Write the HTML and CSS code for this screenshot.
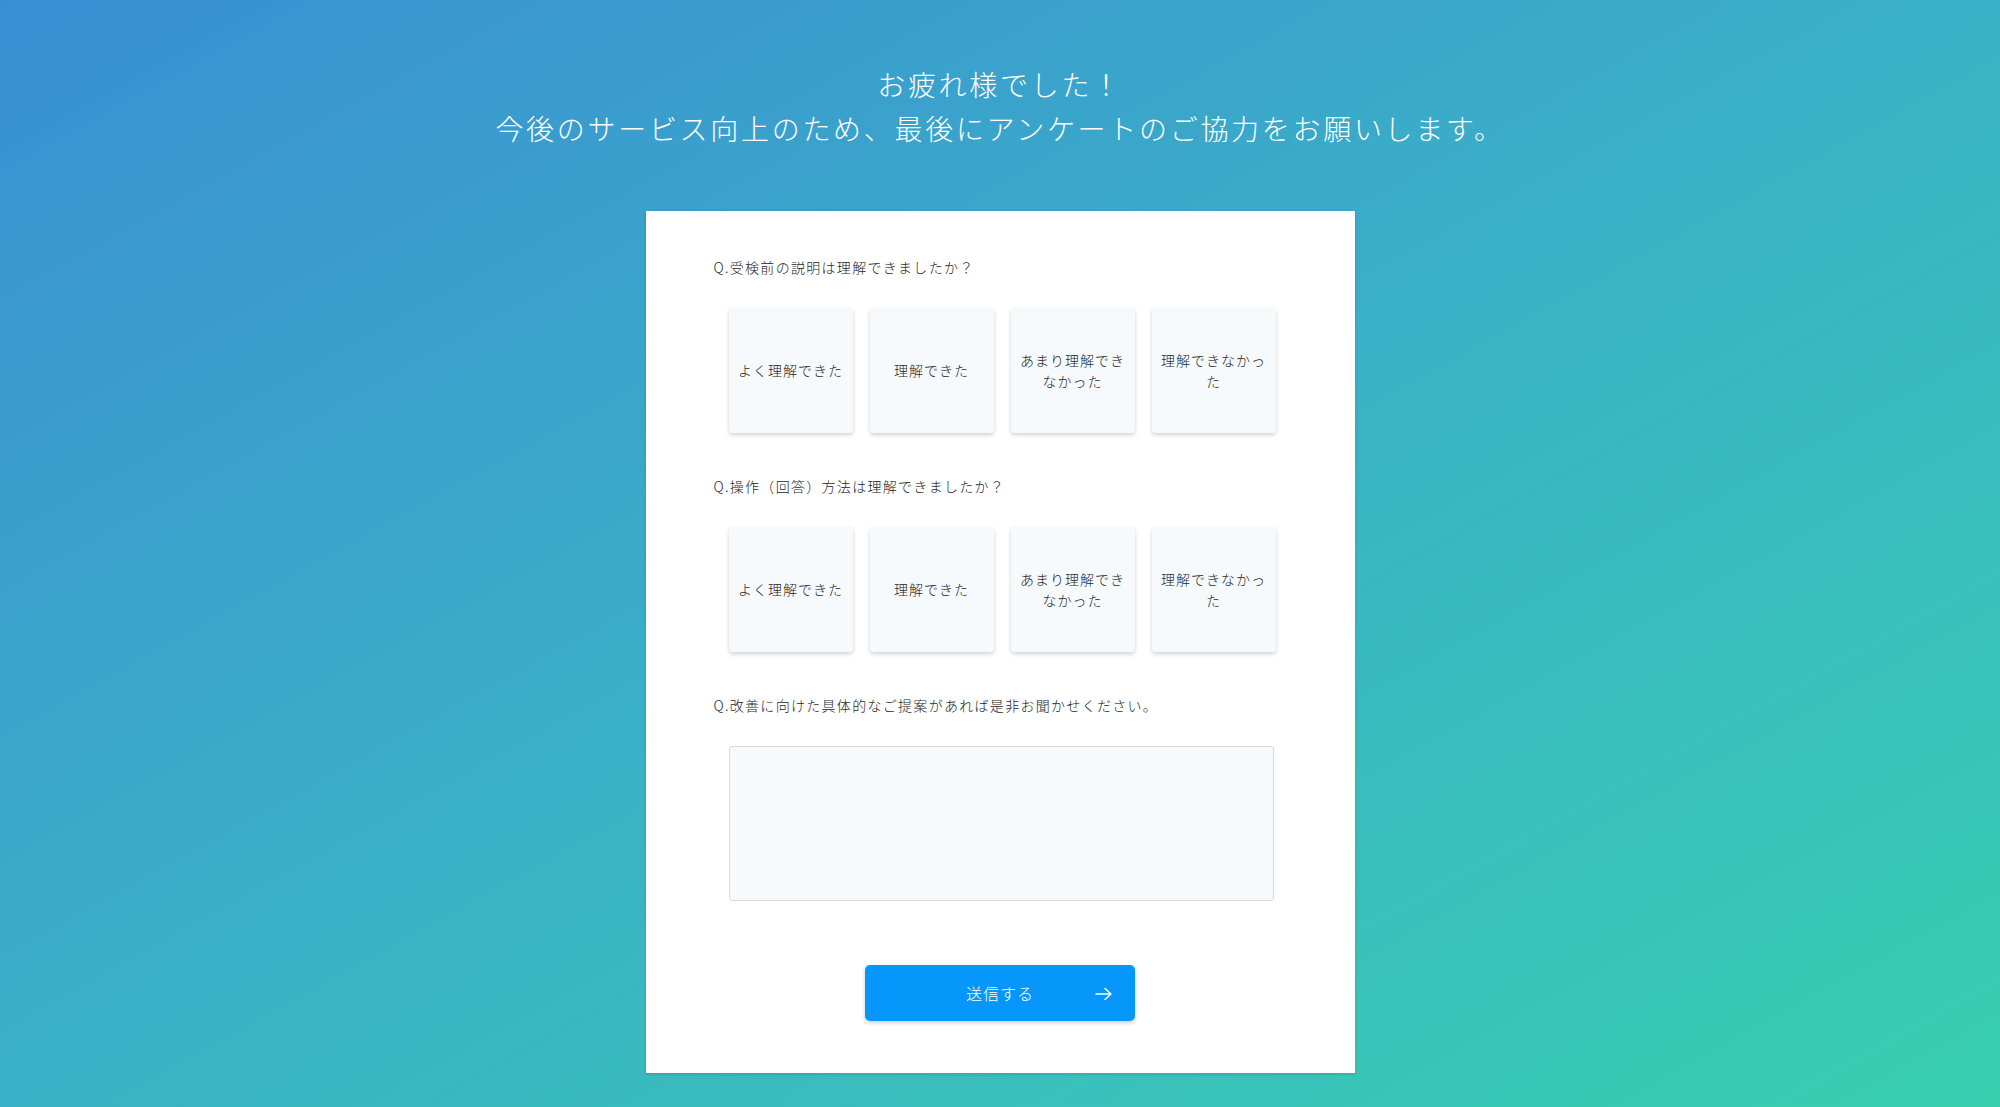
FILE: index.html
```html
<!DOCTYPE html>
<html lang="ja">
<head>
<meta charset="UTF-8">
<meta name="viewport" content="width=device-width, initial-scale=1.0">
<title>アンケート</title>
<link rel="stylesheet" href="styles.css">
</head>
<body>

<div class="lead">
  <p>お疲れ様でした！</p>
  <p>今後のサービス向上のため、最後にアンケートのご協力をお願いします。</p>
</div>

<form class="card" onsubmit="return false">
  <div class="question">
    <p class="q-text">Q.受検前の説明は理解できましたか？</p>
    <div class="options">
      <button type="button" class="option">よく理解できた</button>
      <button type="button" class="option">理解できた</button>
      <button type="button" class="option">あまり理解できなかった</button>
      <button type="button" class="option">理解できなかった</button>
    </div>
  </div>

  <div class="question">
    <p class="q-text">Q.操作（回答）方法は理解できましたか？</p>
    <div class="options">
      <button type="button" class="option">よく理解できた</button>
      <button type="button" class="option">理解できた</button>
      <button type="button" class="option">あまり理解できなかった</button>
      <button type="button" class="option">理解できなかった</button>
    </div>
  </div>

  <div class="question">
    <p class="q-text">Q.改善に向けた具体的なご提案があれば是非お聞かせください。</p>
    <textarea class="comment"></textarea>
  </div>

  <div class="submit-row">
    <button type="submit" class="submit">
      送信する
      <svg class="arrow" width="18" height="14" viewBox="0 0 18 14"><path d="M1 7h15M10 1.5l6 5.5-6 5.5" fill="none" stroke="#fff" stroke-width="1.4" stroke-linecap="round" stroke-linejoin="round"/></svg>
    </button>
  </div>
</form>

<script>
document.querySelectorAll('.options').forEach(row => {
  row.querySelectorAll('.option').forEach(btn => {
    btn.onclick = () => {
      row.querySelectorAll('.option').forEach(b => b.classList.remove('selected'));
      btn.classList.add('selected');
    };
  });
});
</script>

</body>
</html>
```

FILE: styles.css
```css
html, body { margin: 0; padding: 0; }
body { min-height: 100vh; font-family: "Noto Sans CJK JP", "Noto Sans", sans-serif; background: linear-gradient(to bottom right, #3a8fd3, #3ab1c6 50%, #37cfb0); color: #444; }
p { margin: 0; }

.lead { padding-top: 62px; text-align: center; color: #fff; font-size: 28px; font-weight: 200; line-height: 44px; letter-spacing: 2.7px; }

.card { width: 709px; box-sizing: border-box; margin: 61px auto 34px; padding: 46px 68px 52px; background: #fff; box-shadow: 0 1px 3px rgba(0,0,0,0.15); }
.question + .question { margin-top: 43px; }
.q-text { font-size: 14px; font-weight: 300; line-height: 20px; letter-spacing: 1.3px; color: #262626; }

.options { display: flex; gap: 17px; margin: 31px 0 0 15px; }
.option { width: 124px; height: 125px; padding: 0 6px; border: none; border-radius: 4px; background: #f6fafd; box-shadow: 0 2px 4px rgba(0,0,0,0.18); font-family: inherit; font-size: 14px; font-weight: 300; line-height: 21px; letter-spacing: 1px; color: #262626; cursor: pointer; }
.option.selected { background: #0797fa; color: #fff; }

.comment { display: block; width: 545px; height: 155px; box-sizing: border-box; margin: 31px 0 0 15px; border: 1px solid #d5dbe1; border-radius: 3px; background: #f6fafd; resize: none; font-family: inherit; font-size: 14px; }

.submit-row { display: flex; justify-content: center; margin-top: 64px; }
.submit { position: relative; width: 270px; height: 56px; border: none; border-radius: 5px; background: #0797fa; box-shadow: 0 2px 4px rgba(0,0,0,0.2); color: #fff; font-family: inherit; font-size: 16px; font-weight: 300; letter-spacing: 1px; cursor: pointer; }
.submit .arrow { position: absolute; right: 22px; top: 22px; }
```
